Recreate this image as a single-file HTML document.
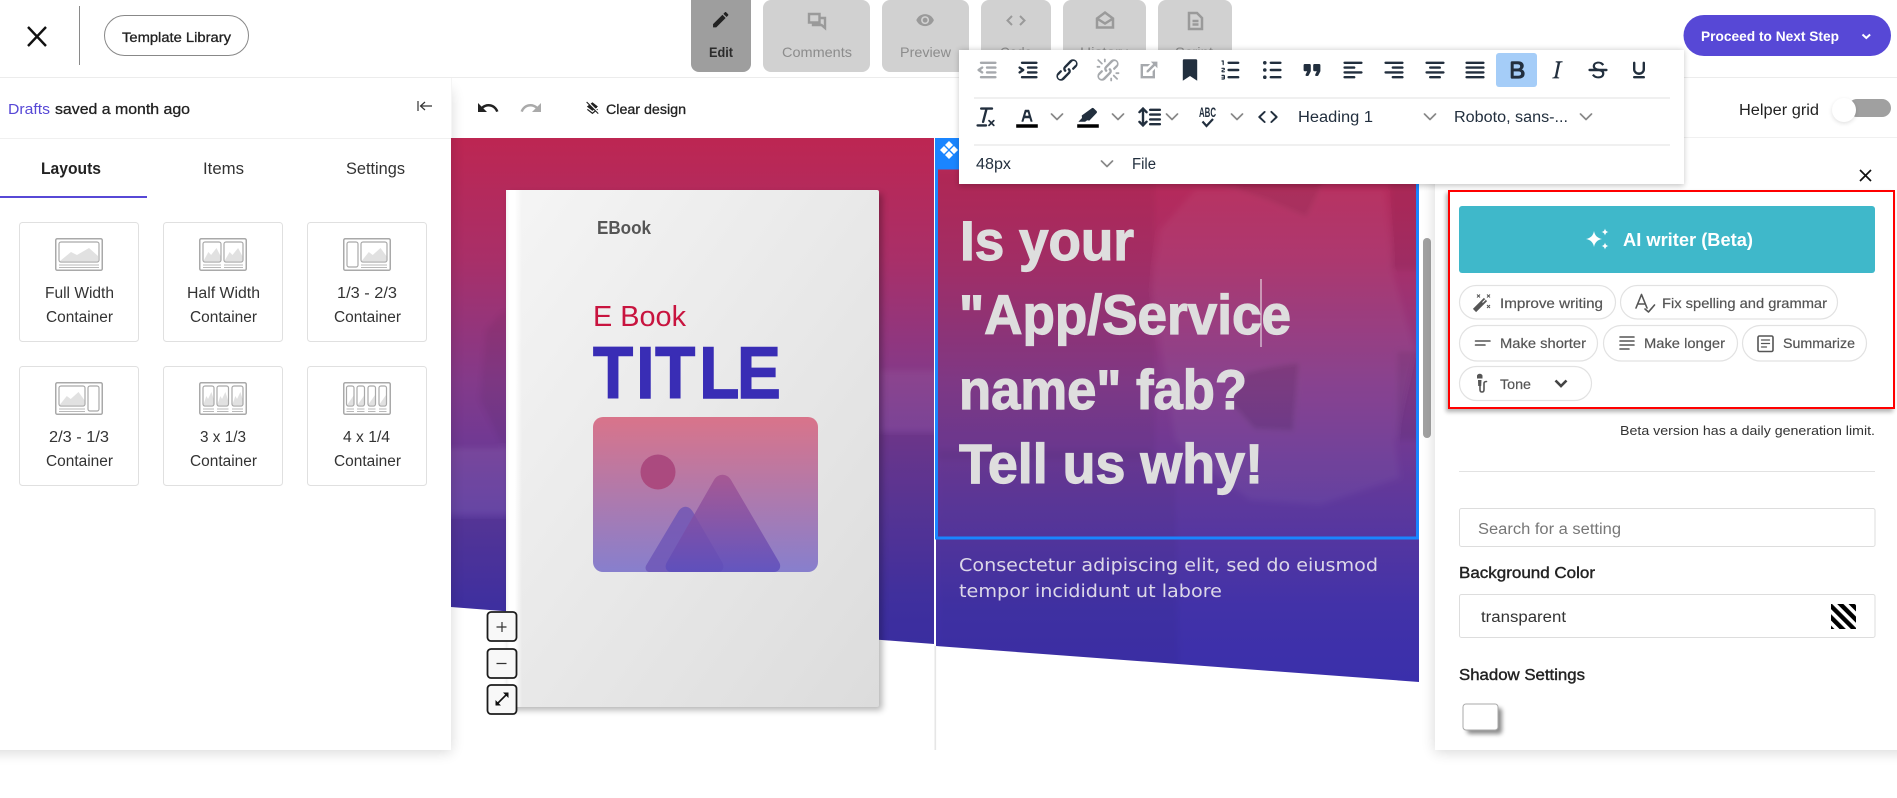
<!DOCTYPE html>
<html lang="en"><head><meta charset="utf-8"><title>Editor</title>
<style>
html,body{margin:0;padding:0;background:#fff;width:1897px;height:798px;overflow:hidden}
svg{display:block}
text{font-family:"Liberation Sans",Arial,sans-serif;fill:#2b2b2b}
.m{stroke:currentColor;stroke-width:.3px}
.i{fill:#222f3e}.g{fill:#a6a9ad}
.tb{fill:#222f3e;font-size:15.5px}
.ct{font-size:15.5px;fill:#333;text-anchor:start}
.pl{font-size:14px;fill:#555;stroke:#555;stroke-width:.2px}
.tab{font-size:14px}
.cv{fill:none;stroke:#888;stroke-width:1.7;stroke-linecap:round;stroke-linejoin:round}
.o{fill:#fff;stroke:#a9a9a9;stroke-width:1.5}
.f{fill:#fff;stroke:#a9a9a9;stroke-width:1.2}
.mt{fill:#e1e1e1}
.l{stroke:#b9b9b9;stroke-width:1}
.pill{fill:#fff;stroke:#e2e2e2;stroke-width:1.2}
.pi{fill:none;stroke:#555;stroke-width:1.6;stroke-linecap:round;stroke-linejoin:round}
.b{fill:#fff;stroke:#ddd;stroke-width:1}
.zb{fill:#f8f8f8;stroke:#1c1c1c;stroke-width:1.8}
.h{font-size:56px;font-weight:700;fill:#dedede;stroke:#dedede;stroke-width:1.2px}
.s{font-family:"DejaVu Sans",sans-serif;font-size:17.5px;fill:#dcd7e8}
.card{fill:#fff;stroke:#e0e0e0;stroke-width:1}
</style></head><body>
<svg width="1897" height="798" viewBox="0 0 1897 798" xmlns="http://www.w3.org/2000/svg">
<defs>
<linearGradient id="hero" gradientUnits="userSpaceOnUse" x1="0" y1="138" x2="0" y2="682">
<stop offset="0" stop-color="#bd2652"/><stop offset=".22" stop-color="#a92f68"/><stop offset=".45" stop-color="#833a8a"/><stop offset=".68" stop-color="#5c389d"/><stop offset=".86" stop-color="#4232a8"/><stop offset="1" stop-color="#3a2fab"/>
</linearGradient>
<linearGradient id="book" x1="0" y1="0" x2="1" y2="1"><stop offset="0" stop-color="#f5f5f5"/><stop offset="1" stop-color="#dcdcdc"/></linearGradient>
<linearGradient id="spine" x1="0" x2="1" y1="0" y2="0"><stop offset="0" stop-color="#f2f2f2"/><stop offset=".2" stop-color="#fff"/><stop offset=".55" stop-color="#fff"/><stop offset="1" stop-color="#fff" stop-opacity="0"/></linearGradient>
<linearGradient id="img" x1="0" x2="0" y1="0" y2="1"><stop offset="0" stop-color="#d9748a"/><stop offset="1" stop-color="#877fcd"/></linearGradient>
<linearGradient id="mnt" x1="0" x2="0" y1="0" y2="1"><stop offset="0" stop-color="#a2508f"/><stop offset="1" stop-color="#5a4cbc"/></linearGradient>
<pattern id="st" width="8" height="8" patternUnits="userSpaceOnUse" patternTransform="rotate(-45)"><rect width="8" height="8" fill="#fff"/><rect width="4.4" height="8" fill="#000"/></pattern>
<filter id="sh" x="-10%" y="-10%" width="120%" height="125%"><feGaussianBlur stdDeviation="7"/></filter>
<filter id="sh2" x="-10%" y="-30%" width="120%" height="160%"><feGaussianBlur stdDeviation="3"/></filter>
<filter id="sh3" x="-30%" y="-30%" width="170%" height="170%"><feGaussianBlur stdDeviation="2"/></filter>
<filter id="sh4" x="-10%" y="-10%" width="120%" height="120%"><feGaussianBlur stdDeviation="3.5"/></filter>
<filter id="bl" x="-20%" y="-20%" width="140%" height="140%"><feGaussianBlur stdDeviation="3"/></filter>
<clipPath id="cL"><polygon points="451,138 934,138 934,644 451,607"/></clipPath>
<clipPath id="cR"><polygon points="936,138 1419,138 1419,682 936,646"/></clipPath>
</defs>
<rect width="1897" height="798" fill="#fff"/>

<!-- HERO LEFT -->
<g clip-path="url(#cL)">
<rect x="451" y="138" width="483" height="510" fill="url(#hero)"/>
<g filter="url(#bl)">
<rect x="445" y="448" width="66" height="66" fill="#fff" opacity=".07"/>
<rect x="445" y="515" width="66" height="100" fill="#000" opacity=".05"/>
<polygon points="486,330 505,310 505,450 480,400" fill="#000" opacity=".05"/>
<polygon points="880,430 940,430 940,650 880,650" fill="#000" opacity=".06"/>
<rect x="880" y="370" width="60" height="60" fill="#fff" opacity=".05"/>
</g>
</g>

<!-- HERO RIGHT -->
<g clip-path="url(#cR)">
<rect x="936" y="138" width="483" height="550" fill="url(#hero)"/>
<g filter="url(#bl)">
<rect x="930" y="170" width="225" height="290" fill="#000" opacity=".04"/>
<polygon points="1152,290 1160,230 1195,190 1385,190 1392,270 1415,350 1395,440 1400,478 1320,505 1250,500 1210,470 1175,440" fill="#fff" opacity=".045"/>
<polygon points="1205,180 1325,180 1307,218 1265,200" fill="#000" opacity=".07"/>
<path d="M1245 372q30-8 55-10l-6 70-40-2-25-28z" fill="#000" opacity=".1"/>
<rect x="1390" y="180" width="35" height="90" fill="#000" opacity=".06"/>
<rect x="1396" y="350" width="28" height="90" fill="#000" opacity=".06"/>
<polygon points="938,450 1150,450 1175,480 1180,700 938,700" fill="#000" opacity=".04"/>
</g>
</g>
<rect x="934.5" y="646" width="1.6" height="104" fill="#e6e6e6"/>

<!-- BOOK -->
<rect x="510" y="194" width="372" height="516" fill="#000" opacity=".3" filter="url(#sh4)"/>
<rect x="506" y="190" width="373" height="517" rx="2" fill="url(#book)"/>
<rect x="506" y="190" width="16" height="517" fill="url(#spine)"/>
<text x="597" y="234" font-size="18" font-weight="700" textLength="54" lengthAdjust="spacingAndGlyphs" style="fill:#555">EBook</text>
<text x="593" y="326" font-size="29" textLength="93" lengthAdjust="spacingAndGlyphs" style="fill:#c8143f">E Book</text>
<text transform="translate(593,398) scale(.9,1)" x="0 48 69 118 160" y="0" font-size="73" font-weight="700" style="fill:#392db5;stroke:#392db5;stroke-width:1.4px">TITLE</text>
<rect x="593" y="417" width="225" height="155" rx="10" fill="url(#img)"/>
<circle cx="658" cy="472" r="17.5" fill="#ab4a7f"/>
<path d="M650 572c-4 0-6-4-3-8l31-52c4-7 11-7 15 0l29 50c3 5 1 10-4 10z" fill="#6a50b4" opacity=".72"/>
<path d="M672 572c-6 0-8-5-5-10l47-82c4-7 13-7 17 0l48 82c3 5 0 10-5 10z" fill="url(#mnt)" opacity=".8"/>

<!-- ZOOM CONTROLS -->
<rect x="487.5" y="612" width="29" height="29" rx="3.5" class="zb"/>
<rect x="487.5" y="649" width="29" height="29" rx="3.5" class="zb"/>
<rect x="487.5" y="685" width="29" height="29" rx="3.5" class="zb"/>
<path d="M496.5 627h10M502 622v10M496.5 663.5h10" stroke="#333" stroke-width="1.2"/>
<path d="M496 705l12-12" stroke="#111" stroke-width="1.6"/><path d="M508.5 692.5v5.5l-5.5-5.5zM495.5 705.5v-5.5l5.5 5.5z" fill="#111"/>

<!-- SELECTION -->
<rect x="936.5" y="168" width="481" height="370" fill="none" stroke="#1a85ff" stroke-width="3"/>
<rect x="935" y="138" width="25" height="30" fill="#1a85ff"/>
<g fill="#fff"><polygon points="949,141 953,145 949,149 945,145"/><polygon points="949,151 953,155 949,159 945,155"/><polygon points="944,146 948,150 944,154 940,150"/><polygon points="954,146 958,150 954,154 950,150"/></g>

<!-- HEADING -->
<text class="h" x="960" y="260" textLength="174" lengthAdjust="spacingAndGlyphs">Is your</text>
<text class="h" x="959" y="334" textLength="332" lengthAdjust="spacingAndGlyphs">"App/Service</text>
<text class="h" x="959" y="409" textLength="288" lengthAdjust="spacingAndGlyphs">name" fab?</text>
<text class="h" x="959" y="483" textLength="304" lengthAdjust="spacingAndGlyphs">Tell us why!</text>
<rect x="1260.5" y="279" width="1" height="68" fill="#f2f2f2"/>
<text class="s" x="959" y="571" textLength="419" lengthAdjust="spacingAndGlyphs">Consectetur adipiscing elit, sed do eiusmod</text>
<text class="s" x="959" y="597" textLength="263" lengthAdjust="spacingAndGlyphs">tempor incididunt ut labore</text>

<!-- SCROLLBAR -->
<rect x="1423" y="238" width="8" height="200" rx="4" fill="#a2a2a2"/>

<!-- RIGHT PANEL -->
<rect x="1435" y="90" width="480" height="662" fill="#000" opacity=".16" filter="url(#sh)"/>
<rect x="1435" y="78" width="462" height="672" fill="#fff"/>
<!-- LEFT PANEL -->
<rect x="-20" y="90" width="471" height="662" fill="#000" opacity=".16" filter="url(#sh)"/>
<rect x="0" y="78" width="451" height="672" fill="#fff"/>

<!-- TOP BAR -->
<rect x="0" y="0" width="1897" height="77" fill="#fff"/>
<rect x="0" y="77" width="1897" height="1" fill="#ececec"/>
<rect x="0" y="138" width="451" height="1" fill="#f0f0f0"/>
<rect x="451" y="78" width="1" height="60" fill="#f5f5f5"/>
<rect x="1435" y="137" width="462" height="1" fill="#f0f0f0"/>
<path d="M28 27l18 19M46 27L28 46" stroke="#111" stroke-width="2.4" fill="none"/>
<rect x="79" y="6" width="1" height="59" fill="#8a8a8a"/>
<rect x="104.5" y="15.5" width="144" height="40" rx="20" fill="#fff" stroke="#888" stroke-width="1"/>
<text class="m" x="122" y="42" font-size="13.5" textLength="109" lengthAdjust="spacingAndGlyphs" style="color:#222;fill:#222">Template Library</text>

<!-- Tabs -->
<path d="M691 0h60v64a8 8 0 0 1-8 8h-44a8 8 0 0 1-8-8z" fill="#9e9e9e"/>
<path d="M763 8a8 8 0 0 1 8-8h91a8 8 0 0 1 8 8v56a8 8 0 0 1-8 8h-91a8 8 0 0 1-8-8z" fill="#d1d1d1"/>
<path d="M882 8a8 8 0 0 1 8-8h71a8 8 0 0 1 8 8v56a8 8 0 0 1-8 8h-71a8 8 0 0 1-8-8z" fill="#d1d1d1"/>
<path d="M981 8a8 8 0 0 1 8-8h54a8 8 0 0 1 8 8v56a8 8 0 0 1-8 8h-54a8 8 0 0 1-8-8z" fill="#d1d1d1"/>
<path d="M1063 8a8 8 0 0 1 8-8h67a8 8 0 0 1 8 8v56a8 8 0 0 1-8 8h-67a8 8 0 0 1-8-8z" fill="#d1d1d1"/>
<path d="M1158 8a8 8 0 0 1 8-8h58a8 8 0 0 1 8 8v56a8 8 0 0 1-8 8h-58a8 8 0 0 1-8-8z" fill="#d1d1d1"/>
<path transform="translate(710.5,9.5) scale(.85)" d="M3 17.25V21h3.75L17.81 9.94l-3.75-3.75L3 17.25zM20.71 7.04c.39-.39.39-1.02 0-1.41l-2.34-2.34c-.39-.39-1.02-.39-1.41 0l-1.83 1.83 3.75 3.75 1.83-1.83z" fill="#222"/>
<path d="M809 14h10.500v8.500h-10.500zM819.500 18h5.500v10l-3.500-3H813v-2.500" fill="none" stroke="#9a9a9a" stroke-width="2.400"/>
<path transform="translate(915.5,10.5) scale(.8)" d="M12 4.5C7 4.5 2.73 7.61 1 12c1.73 4.39 6 7.5 11 7.5s9.27-3.11 11-7.5c-1.73-4.39-6-7.5-11-7.5zM12 17c-2.76 0-5-2.24-5-5s2.24-5 5-5 5 2.24 5 5-2.24 5-5 5zm0-8c-1.66 0-3 1.34-3 3s1.34 3 3 3 3-1.34 3-3-1.34-3-3-3z" fill="#9a9a9a"/>
<path d="M1012 16l-4.500 4.500 4.500 4.500M1020 16l4.500 4.500-4.500 4.500" fill="none" stroke="#9a9a9a" stroke-width="2"/>
<path d="M1097 18.500l8-6 8 6v9h-16zM1097 18.500l8 5 8-5" fill="none" stroke="#9a9a9a" stroke-width="2.500"/>
<path d="M1189 13h8l5 5v11h-13zM1192.500 21h6M1192.500 24.500h6" fill="none" stroke="#9a9a9a" stroke-width="2.500"/>
<text class="tab" x="709" y="57" textLength="24" lengthAdjust="spacingAndGlyphs" style="fill:#2b2b2b;font-weight:700;font-size:13.5px">Edit</text>
<text class="tab" x="782" y="57" textLength="70" lengthAdjust="spacingAndGlyphs" style="fill:#8c8c8c">Comments</text>
<text class="tab" x="900" y="57" textLength="51" lengthAdjust="spacingAndGlyphs" style="fill:#8c8c8c">Preview</text>
<text class="tab" x="1000" y="57" textLength="32" lengthAdjust="spacingAndGlyphs" style="fill:#8c8c8c">Code</text>
<text class="tab" x="1080" y="57" textLength="48" lengthAdjust="spacingAndGlyphs" style="fill:#8c8c8c">History</text>
<text class="tab" x="1175" y="57" textLength="38" lengthAdjust="spacingAndGlyphs" style="fill:#8c8c8c">Script</text>

<!-- Proceed -->
<rect x="1683.5" y="15" width="207.5" height="41" rx="20.5" fill="#5748d6"/>
<text x="1701" y="41" font-size="14" font-weight="700" textLength="138" lengthAdjust="spacingAndGlyphs" style="fill:#fff">Proceed to Next Step</text>
<path d="M1862.5 34.500l3.800 3.500 3.800-3.500" fill="none" stroke="#fff" stroke-width="2"/>

<!-- LEFT PANEL CONTENT -->
<text x="8" y="114" font-size="15" textLength="42" lengthAdjust="spacingAndGlyphs" style="fill:#5748d6">Drafts</text>
<text class="m" x="55" y="114" font-size="15" textLength="135" lengthAdjust="spacingAndGlyphs" style="color:#222;fill:#222">saved a month ago</text>
<path d="M418 101v10M432 106h-11M425 102l-4.5 4 4.5 4" fill="none" stroke="#333" stroke-width="1.2"/>
<text x="41" y="174" font-size="17" font-weight="700" textLength="60" lengthAdjust="spacingAndGlyphs" style="fill:#222">Layouts</text>
<text x="203" y="174" font-size="17" textLength="41" lengthAdjust="spacingAndGlyphs" style="fill:#333">Items</text>
<text x="346" y="174" font-size="17" textLength="59" lengthAdjust="spacingAndGlyphs" style="fill:#333">Settings</text>
<rect x="0" y="196" width="147" height="2" fill="#5748d6"/>

<!-- Cards -->
<rect class="card" x="19.5" y="222.5" width="119" height="119" rx="3"/>
<rect class="card" x="163.5" y="222.5" width="119" height="119" rx="3"/>
<rect class="card" x="307.5" y="222.5" width="119" height="119" rx="3"/>
<rect class="card" x="19.5" y="366.5" width="119" height="119" rx="3"/>
<rect class="card" x="163.5" y="366.5" width="119" height="119" rx="3"/>
<rect class="card" x="307.5" y="366.5" width="119" height="119" rx="3"/>

<g transform="translate(55,238)"><rect class="o" x=".75" y=".75" width="46.5" height="31.5" rx="1.5"/><polygon class="mt" transform="translate(4,4)" points="1,19 12,10 18,13 30,6 39,14 39,19"/><rect class="f" x="4" y="4" width="40" height="20" rx="2" fill-opacity="0"/><path class="l" d="M4 27h40M4 29.5h40"/></g>
<g transform="translate(199,238)"><rect class="o" x=".75" y=".75" width="46.5" height="31.5" rx="1.5"/><polygon class="mt" transform="translate(4,4) scale(.45,1)" points="1,19 12,10 18,13 30,6 39,14 39,19"/><polygon class="mt" transform="translate(25,4) scale(.47,1)" points="1,19 12,10 18,13 30,6 39,14 39,19"/><rect class="f" x="4" y="4" width="18" height="20" rx="2" fill-opacity="0"/><rect class="f" x="25" y="4" width="19" height="20" rx="2" fill-opacity="0"/><path class="l" d="M4 27h18M25 27h19M4 29.5h18M25 29.5h19"/></g>
<g transform="translate(343,238)"><rect class="o" x=".75" y=".75" width="46.5" height="31.5" rx="1.5"/><rect class="f" x="4" y="4" width="11" height="25" rx="2"/><polygon class="mt" transform="translate(18,4) scale(.65,1)" points="1,19 12,10 18,13 30,6 39,14 39,19"/><rect class="f" x="18" y="4" width="26" height="20" rx="2" fill-opacity="0"/><path class="l" d="M18 27h26M18 29.5h26"/></g>
<g transform="translate(55,382)"><rect class="o" x=".75" y=".75" width="46.5" height="31.5" rx="1.5"/><polygon class="mt" transform="translate(4,4) scale(.65,1)" points="1,19 12,10 18,13 30,6 39,14 39,19"/><rect class="f" x="4" y="4" width="26" height="20" rx="2" fill-opacity="0"/><rect class="f" x="33" y="4" width="11" height="25" rx="2"/><path class="l" d="M4 27h26M4 29.5h26"/></g>
<g transform="translate(199,382)"><rect class="o" x=".75" y=".75" width="46.5" height="31.5" rx="1.5"/><polygon class="mt" transform="translate(4,4) scale(.28,1)" points="1,19 12,10 18,13 30,6 39,14 39,19"/><polygon class="mt" transform="translate(18,4) scale(.28,1)" points="1,19 12,10 18,13 30,6 39,14 39,19"/><polygon class="mt" transform="translate(33,4) scale(.28,1)" points="1,19 12,10 18,13 30,6 39,14 39,19"/><rect class="f" x="4" y="4" width="11" height="20" rx="2" fill-opacity="0"/><rect class="f" x="18" y="4" width="11.5" height="20" rx="2" fill-opacity="0"/><rect class="f" x="33" y="4" width="11" height="20" rx="2" fill-opacity="0"/><path class="l" d="M4 27h11M18 27h11.5M33 27h11M4 29.5h11M18 29.5h11.5M33 29.5h11"/></g>
<g transform="translate(343,382)"><rect class="o" x=".75" y=".75" width="46.5" height="31.5" rx="1.5"/><polygon class="mt" points="4,23 11,13 11,23"/><polygon class="mt" points="14.5,23 21.5,13 21.5,23"/><polygon class="mt" points="25,23 32,13 32,23"/><polygon class="mt" points="36,23 43,13 43,23"/><rect class="f" x="3.5" y="4" width="7.5" height="20" rx="2" fill-opacity="0"/><rect class="f" x="14" y="4" width="7.5" height="20" rx="2" fill-opacity="0"/><rect class="f" x="25" y="4" width="7.5" height="20" rx="2" fill-opacity="0"/><rect class="f" x="36" y="4" width="7.5" height="20" rx="2" fill-opacity="0"/><path class="l" d="M3.5 27h7.5M14 27h7.5M25 27h7.5M36 27h7.5M3.5 29.5h7.5M14 29.5h7.5M25 29.5h7.5M36 29.5h7.5"/></g>

<text class="ct" x="45" y="298" textLength="69" lengthAdjust="spacingAndGlyphs">Full Width</text>
<text class="ct" x="46" y="322" textLength="67" lengthAdjust="spacingAndGlyphs">Container</text>
<text class="ct" x="187" y="298" textLength="73" lengthAdjust="spacingAndGlyphs">Half Width</text>
<text class="ct" x="190" y="322" textLength="67" lengthAdjust="spacingAndGlyphs">Container</text>
<text class="ct" x="337" y="298" textLength="60" lengthAdjust="spacingAndGlyphs">1/3 - 2/3</text>
<text class="ct" x="334" y="322" textLength="67" lengthAdjust="spacingAndGlyphs">Container</text>
<text class="ct" x="49" y="442" textLength="60" lengthAdjust="spacingAndGlyphs">2/3 - 1/3</text>
<text class="ct" x="46" y="466" textLength="67" lengthAdjust="spacingAndGlyphs">Container</text>
<text class="ct" x="200" y="442" textLength="46" lengthAdjust="spacingAndGlyphs">3 x 1/3</text>
<text class="ct" x="190" y="466" textLength="67" lengthAdjust="spacingAndGlyphs">Container</text>
<text class="ct" x="343" y="442" textLength="47" lengthAdjust="spacingAndGlyphs">4 x 1/4</text>
<text class="ct" x="334" y="466" textLength="67" lengthAdjust="spacingAndGlyphs">Container</text>

<!-- CANVAS TOOLBAR -->
<path transform="translate(476,96)" d="M12.5 8c-2.65 0-5.05.99-6.9 2.6L2 7v9h9l-3.62-3.62c1.39-1.16 3.16-1.88 5.12-1.88 3.54 0 6.55 2.31 7.6 5.5l2.37-.78C21.08 11.03 17.15 8 12.5 8z" fill="#222"/>
<path transform="translate(519,96)" d="M18.4 10.6C16.55 8.99 14.15 8 11.5 8c-4.65 0-8.58 3.03-9.96 7.22L3.9 16c1.05-3.19 4.05-5.5 7.6-5.5 1.95 0 3.73.72 5.12 1.88L13 16h9V7l-3.6 3.6z" fill="#aaa"/>
<path transform="translate(585,101) scale(.62)" d="M19.81 14.99l1.19-.92-1.43-1.43-1.19.92 1.43 1.43zm-.45-5.14L21 9l-9-7-2.91 2.27 7.87 7.88 2.4-1.3zM3.27 1L2 2.27l4.22 4.22L3 9l1.63 1.27L12 16l2.1-1.63 1.43 1.43L12 18.54l-7.37-5.73L3 14.07l9 7 4.95-3.85L20.73 21 22 19.73 3.27 1z" fill="#222"/>
<text class="m" x="606" y="114" font-size="13.5" textLength="80" lengthAdjust="spacingAndGlyphs" style="color:#222;fill:#222">Clear design</text>

<text x="1739" y="115" font-size="15.5" textLength="80" lengthAdjust="spacingAndGlyphs" style="fill:#222">Helper grid</text>
<rect x="1848" y="99" width="43" height="18" rx="9" fill="#a0a0a0"/>
<circle cx="1844" cy="111.5" r="12" fill="#000" opacity=".12" filter="url(#sh3)"/>
<circle cx="1844" cy="110" r="12" fill="#fff"/>

<!-- TINYMCE TOOLBAR -->
<rect x="959" y="50" width="725" height="136" fill="#000" opacity=".22" filter="url(#sh2)"/>
<rect x="959" y="50" width="725" height="134" fill="#fff"/>
<rect x="974" y="97.5" width="696" height="1" fill="#e0e0e0"/>
<rect x="974" y="144.5" width="696" height="1" fill="#e0e0e0"/>
<rect x="1496" y="53" width="41" height="34" rx="3" fill="#a5cdf8"/>

<g transform="translate(972.6,55.6) scale(1.2)" class="g"><path d="M7 5h12c.6 0 1 .4 1 1s-.4 1-1 1H7a1 1 0 1 1 0-2zm5 4h7c.6 0 1 .4 1 1s-.4 1-1 1h-7a1 1 0 0 1 0-2zm0 4h7c.6 0 1 .4 1 1s-.4 1-1 1h-7a1 1 0 0 1 0-2zm-5 4h12a1 1 0 0 1 0 2H7a1 1 0 0 1 0-2zm1.6-3.8a1 1 0 0 1-1.2 1.6l-3-2a1 1 0 0 1 0-1.6l3-2a1 1 0 0 1 1.2 1.6L6.8 12l1.8 1.2z"/></g>
<g transform="translate(1013.6,55.6) scale(1.2)" class="i"><path d="M7 5h12c.6 0 1 .4 1 1s-.4 1-1 1H7a1 1 0 1 1 0-2zm5 4h7c.6 0 1 .4 1 1s-.4 1-1 1h-7a1 1 0 0 1 0-2zm0 4h7c.6 0 1 .4 1 1s-.4 1-1 1h-7a1 1 0 0 1 0-2zm-5 4h12a1 1 0 0 1 0 2H7a1 1 0 0 1 0-2zm-2.6-3.8L6.2 12l-1.8-1.2a1 1 0 0 1 1.2-1.6l3 2a1 1 0 0 1 0 1.6l-3 2a1 1 0 1 1-1.2-1.6z"/></g>
<g transform="translate(1052.6,55.6) scale(1.2)" class="i"><path d="M6.2 12.3a1 1 0 0 1 1.4 1.4l-2 2a2 2 0 1 0 2.6 2.8l4.8-4.8a1 1 0 0 0 0-1.4 1 1 0 1 1 1.4-1.3 2.9 2.9 0 0 1 0 4L9.6 20a3.9 3.9 0 0 1-5.5-5.5l2-2zm11.6-.6a1 1 0 0 1-1.4-1.4l2-2a2 2 0 1 0-2.6-2.8L11 10.3a1 1 0 0 0 0 1.4A1 1 0 1 1 9.6 13a2.9 2.9 0 0 1 0-4L14.4 4a3.9 3.9 0 0 1 5.5 5.5l-2 2z"/></g>
<g transform="translate(1093.6,55.6) scale(1.2)" class="g"><path d="M6.2 12.3a1 1 0 0 1 1.4 1.4l-2.1 2a2 2 0 1 0 2.7 2.8l4.8-4.8a1 1 0 0 0 0-1.4 1 1 0 1 1 1.4-1.3 2.9 2.9 0 0 1 0 4L9.6 20a3.9 3.9 0 0 1-5.5-5.5l2-2zm11.6-.6a1 1 0 0 1-1.4-1.4l2.1-2a2 2 0 1 0-2.7-2.8L11 10.3a1 1 0 0 0 0 1.4A1 1 0 1 1 9.6 13a2.9 2.9 0 0 1 0-4L14.4 4a3.9 3.9 0 0 1 5.5 5.5l-2 2zM7.6 6.3a.8.8 0 0 1-1 1.1L3.3 4.2a.7.7 0 1 1 1-1l3.2 3.1zM5.1 8.6a.8.8 0 0 1 0 1.5H3a.8.8 0 0 1 0-1.5H5zm5-3.5a.8.8 0 0 1-1.5 0V3a.8.8 0 0 1 1.5 0v2zm6 11.8a.8.8 0 0 1 1-1l3.2 3.2a.8.8 0 0 1-1 1L16 17zm-2.2 2a.8.8 0 0 1 1.5 0V21a.8.8 0 0 1-1.5 0V19zm5-3.5a.7.7 0 1 1 0-1.5H21a.8.8 0 0 1 0 1.5h-2z"/></g>
<g transform="translate(1134.6,55.6) scale(1.2)" class="g"><path d="M15 13l2-2v8H5V7h8l-2 2H7v8h8v-4zm4-8v5.5l-2-2-5.6 5.5H10v-1.4L15.5 7l-2-2H19z"/></g>
<g transform="translate(1175.6,55.6) scale(1.2)" class="i"><path d="M6 4v17l6-4 6 4V4c0-.6-.4-1-1-1H7a1 1 0 0 0-1 1z"/></g>
<g transform="translate(1216.6,55.6) scale(1.2)" class="i"><path d="M10 17h8c.6 0 1 .4 1 1s-.4 1-1 1h-8a1 1 0 0 1 0-2zm0-6h8c.6 0 1 .4 1 1s-.4 1-1 1h-8a1 1 0 0 1 0-2zm0-6h8c.6 0 1 .4 1 1s-.4 1-1 1h-8a1 1 0 1 1 0-2zM6 4v3.5c0 .3-.2.5-.5.5a.5.5 0 0 1-.5-.5V5h-.5a.5.5 0 0 1 0-1H6zm-1 8.8l.2.2h1.3c.3 0 .5.2.5.5s-.2.5-.5.5H4.9a1 1 0 0 1-.9-1V13c0-.4.3-.8.6-1l1.2-.4.2-.3a.2.2 0 0 0-.2-.2H4.5a.5.5 0 0 1-.5-.5c0-.3.2-.5.5-.5h1.6c.5 0 .9.4.9 1v.1c0 .4-.3.8-.6 1l-1.2.4-.2.3zM7 17v2c0 .6-.4 1-1 1H4.5a.5.5 0 0 1 0-1h1.2c.2 0 .3-.1.3-.3 0-.2-.1-.3-.3-.3H4.4a.4.4 0 1 1 0-.8h1.3c.2 0 .3-.1.3-.3 0-.2-.1-.3-.3-.3H4.5a.5.5 0 1 1 0-1H6c.6 0 1 .4 1 1z"/></g>
<g transform="translate(1257.6,55.6) scale(1.2)" class="i"><path d="M11 5h8c.6 0 1 .4 1 1s-.4 1-1 1h-8a1 1 0 0 1 0-2zm0 6h8c.6 0 1 .4 1 1s-.4 1-1 1h-8a1 1 0 0 1 0-2zm0 6h8c.6 0 1 .4 1 1s-.4 1-1 1h-8a1 1 0 0 1 0-2z"/><circle cx="6" cy="6" r="1.5"/><circle cx="6" cy="12" r="1.5"/><circle cx="6" cy="18" r="1.5"/></g>
<g transform="translate(1297.6,55.6) scale(1.2)" class="i"><path d="M7.5 17h.9c.4 0 .7-.2.9-.6L11 13V8c0-.6-.4-1-1-1H6a1 1 0 0 0-1 1v4c0 .6.4 1 1 1h2l-1.3 2.7a1 1 0 0 0 .8 1.3zm8 0h.9c.4 0 .7-.2.9-.6L19 13V8c0-.6-.4-1-1-1h-4a1 1 0 0 0-1 1v4c0 .6.4 1 1 1h2l-1.3 2.7a1 1 0 0 0 .8 1.3z"/></g>
<g transform="translate(1338.6,55.6) scale(1.2)" class="i"><path d="M5 5h14c.6 0 1 .4 1 1s-.4 1-1 1H5a1 1 0 1 1 0-2zm0 4h8c.6 0 1 .4 1 1s-.4 1-1 1H5a1 1 0 1 1 0-2zm0 8h8c.6 0 1 .4 1 1s-.4 1-1 1H5a1 1 0 0 1 0-2zm0-4h14c.6 0 1 .4 1 1s-.4 1-1 1H5a1 1 0 0 1 0-2z"/></g>
<g transform="translate(1379.6,55.6) scale(1.2)" class="i"><path d="M5 5h14c.6 0 1 .4 1 1s-.4 1-1 1H5a1 1 0 1 1 0-2zm6 4h8c.6 0 1 .4 1 1s-.4 1-1 1h-8a1 1 0 0 1 0-2zm0 8h8c.6 0 1 .4 1 1s-.4 1-1 1h-8a1 1 0 0 1 0-2zm-6-4h14c.6 0 1 .4 1 1s-.4 1-1 1H5a1 1 0 0 1 0-2z"/></g>
<g transform="translate(1420.6,55.6) scale(1.2)" class="i"><path d="M5 5h14c.6 0 1 .4 1 1s-.4 1-1 1H5a1 1 0 1 1 0-2zm3 4h8c.6 0 1 .4 1 1s-.4 1-1 1H8a1 1 0 1 1 0-2zm0 8h8c.6 0 1 .4 1 1s-.4 1-1 1H8a1 1 0 0 1 0-2zm-3-4h14c.6 0 1 .4 1 1s-.4 1-1 1H5a1 1 0 0 1 0-2z"/></g>
<g transform="translate(1460.6,55.6) scale(1.2)" class="i"><path d="M5 5h14c.6 0 1 .4 1 1s-.4 1-1 1H5a1 1 0 1 1 0-2zm0 4h14c.6 0 1 .4 1 1s-.4 1-1 1H5a1 1 0 1 1 0-2zm0 4h14c.6 0 1 .4 1 1s-.4 1-1 1H5a1 1 0 0 1 0-2zm0 4h14c.6 0 1 .4 1 1s-.4 1-1 1H5a1 1 0 0 1 0-2z"/></g>
<g transform="translate(1502.6,55.6) scale(1.2)" class="i" stroke="#222f3e" stroke-width=".5"><path d="M7.8 19c-.3 0-.5 0-.6-.2l-.2-.5V5.700c0-.2 0-.4.2-.5l.6-.2h5c1.500 0 2.700.3 3.500 1 .7.6 1.100 1.400 1.100 2.500a3 3 0 0 1-.6 1.900c-.4.6-1 1-1.600 1.200.9.1 1.600.5 2.100 1.100.5.6.8 1.400.8 2.300 0 1.200-.4 2.200-1.200 2.900-.8.7-2 1-3.600 1H7.800zM9 11h3.200c1.800 0 2.700-.7 2.700-2s-.9-2-2.700-2H9v4zm0 6h3.900c1.900 0 2.800-.7 2.800-2.100 0-1.400-.9-2-2.800-2H9V17z"/></g>
<g transform="translate(1542.6,55.6) scale(1.2)" class="i"><path d="M16.7 4.700l-.1.9h-.3c-.6 0-1 0-1.400.3-.3.3-.4.6-.5 1.100l-2.100 9.800v.6c0 .5.4.8 1.400.8h.2l-.2.8H8l.2-.8h.2c1.100 0 1.800-.5 2-1.500l2-9.800.1-.5c0-.6-.4-.8-1.400-.8h-.3l.2-.9h5.800z"/></g>
<g transform="translate(1583.6,55.6) scale(1.2)" class="i"><path d="M15.600 8.500c-.5-.7-1-1.100-1.300-1.300-.6-.4-1.300-.6-2-.6-2.700 0-2.800 1.700-2.800 2.100 0 1.600 1.800 2 3.200 2.300 4.400.9 4.600 2.800 4.600 3.900 0 1.400-.7 4.100-5 4.100A6.200 6.200 0 0 1 7 16.400l1.500-1.100c.4.6 1.600 2 3.700 2 1.600 0 2.500-.4 3-1.200.4-.8.3-2-.8-2.600-.7-.4-1.600-.7-2.900-1-1-.2-3.900-.8-3.900-3.600C7.600 6 10.300 5 12.400 5c2.900 0 4.200 1.600 4.700 2.400l-1.500 1.100z"/><path d="M5 11h14a1 1 0 0 1 0 2H5a1 1 0 0 1 0-2z"/></g>
<g transform="translate(1624.6,55.6) scale(1.2)" class="i"><path d="M16 5c.6 0 1 .4 1 1v5.500a4 4 0 0 1-.4 1.800l-1 1.400a5.300 5.300 0 0 1-5.500 1 5 5 0 0 1-1.600-1c-.5-.4-.8-.9-1.100-1.400a4 4 0 0 1-.4-1.800V6c0-.6.4-1 1-1s1 .4 1 1v5.500c0 .3 0 .6.2 1l.6.7a3.300 3.300 0 0 0 2.200.8 3.400 3.400 0 0 0 2.200-.8c.3-.2.4-.5.6-.8l.2-.9V6c0-.6.4-1 1-1zM8 17h8c.6 0 1 .4 1 1s-.4 1-1 1H8a1 1 0 0 1 0-2z"/></g>

<!-- Row 2 -->
<g transform="translate(971.6,102.6) scale(1.2)" class="i"><path d="M13.200 6a1 1 0 0 1 0 .2l-2.600 10a1 1 0 0 1-1 .8h-.2a.8.8 0 0 1-.8-1l2.600-10H8a1 1 0 1 1 0-2h9a1 1 0 0 1 0 2h-3.800zM5 18h7a1 1 0 0 1 0 2H5a1 1 0 0 1 0-2zm13 1.500L16.500 18 15 19.500a.7.7 0 0 1-1-1l1.500-1.500-1.500-1.500a.7.7 0 0 1 1-1l1.500 1.500 1.500-1.500a.7.7 0 0 1 1 1L17.500 17l1.500 1.500a.7.7 0 0 1-1 1z"/></g>
<g transform="translate(1012.6,102.6) scale(1.2)" class="i"><path fill="#000" d="M3 18h18v3H3z"/><path d="M8.700 16h-.8a.5.5 0 0 1-.5-.6l2.700-9c.1-.3.3-.4.5-.4h2.800c.2 0 .4.1.5.4l2.700 9a.5.5 0 0 1-.5.6h-.8a.5.5 0 0 1-.4-.4l-.7-2.200c0-.3-.3-.4-.5-.4h-3.400c-.2 0-.4.1-.5.4l-.7 2.200c0 .3-.2.4-.4.4zm2.600-7.600l-.6 2a.5.5 0 0 0 .5.6h1.600a.5.5 0 0 0 .5-.6l-.6-2c0-.3-.3-.4-.5-.4h-.4c-.2 0-.4.1-.5.4z"/></g>
<path class="cv" d="M1051.5 114l5.500 5.500 5.500-5.500M1112.5 114l5.500 5.500 5.500-5.500M1166.5 114l5.500 5.500 5.500-5.500M1231.5 114l5.500 5.500 5.500-5.500"/>
<g transform="translate(1073.6,102.6) scale(1.2)" class="i"><path fill="#000" d="M3 18h18v3H3z"/><path d="M15 4.800c.5-.5 1.300-.5 1.800 0l2.300 2.200c.5.5.5 1.300 0 1.800l-6 6.200-1.800-.3-1.700 1.300H4l3-3.200-.2-2z"/></g>
<g transform="translate(1134.6,102.6) scale(1.2)" class="i"><path d="M21 5a1 1 0 0 1 .1 2H13a1 1 0 0 1-.1-2H21zm0 4a1 1 0 0 1 .1 2H13a1 1 0 0 1-.1-2H21zm0 4a1 1 0 0 1 .1 2H13a1 1 0 0 1-.1-2H21zm0 4a1 1 0 0 1 .1 2H13a1 1 0 0 1-.1-2H21zM7 3.600l3.700 3.700a1 1 0 0 1-1.300 1.500h-.1L8 7.300v9.200l1.300-1.300a1 1 0 0 1 1.300 0h.1c.4.400.4 1 0 1.300v.1L7 20.400l-3.700-3.700a1 1 0 0 1 1.300-1.500h.1L6 16.700V7.400L4.700 8.700a1 1 0 0 1-1.300 0h-.1a1 1 0 0 1 0-1.300v-.1L7 3.600z"/></g>
<text x="1199" y="117" font-size="13.5" font-weight="700" textLength="17" lengthAdjust="spacingAndGlyphs" style="fill:#222f3e">ABC</text>
<path d="M1202.500 121.500l4 4.500 6.500-7" fill="none" stroke="#222f3e" stroke-width="2.200"/>
<g transform="translate(1253.6,102.6) scale(1.2)" class="i"><path d="M9.800 15.700c.3.300.3.800 0 1-.3.400-.9.400-1.200 0l-4.400-4.100a.8.800 0 0 1 0-1.200l4.400-4.200c.3-.3.900-.3 1.200 0 .3.300.3.800 0 1.100L6 12l3.800 3.700zM14.200 15.700c-.3.300-.3.800 0 1 .4.400.9.400 1.200 0l4.400-4.100c.3-.3.3-.9 0-1.200l-4.400-4.200a.8.800 0 0 0-1.200 0c-.3.300-.3.800 0 1.100L18 12l-3.800 3.700z"/></g>
<text class="tb" x="1298" y="122" textLength="75" lengthAdjust="spacingAndGlyphs">Heading 1</text>
<path class="cv" d="M1424.500 114l5.500 5.500 5.500-5.500M1580.500 114l5.500 5.500 5.500-5.500M1101.500 161l5.500 5.500 5.500-5.500"/>
<text class="tb" x="1454" y="122" textLength="114" lengthAdjust="spacingAndGlyphs">Roboto, sans-...</text>
<text class="tb" x="976" y="169" textLength="35" lengthAdjust="spacingAndGlyphs">48px</text>
<text class="tb" x="1132" y="169" textLength="24" lengthAdjust="spacingAndGlyphs">File</text>

<!-- RIGHT PANEL CONTENT -->
<path d="M1860 170l11 11M1871 170l-11 11" stroke="#111" stroke-width="1.7"/>
<rect x="1446" y="193" width="447" height="219" fill="#000" opacity=".3" filter="url(#sh3)"/>
<rect x="1449" y="191" width="445" height="217" fill="#fff" stroke="#f00" stroke-width="2"/>
<rect x="1459" y="206" width="416" height="67" rx="3" fill="#3fb8ca"/>
<path d="M1594 231q1.200 6.800 8 8-6.800 1.200-8 8-1.200-6.800-8-8 6.800-1.200 8-8zM1605 228.500q.5 3 3.500 3.500-3 .5-3.500 3.500-.5-3-3.500-3.500 3-.5 3.500-3.500zM1605 242.500q.5 3 3.500 3.500-3 .5-3.500 3.500-.5-3-3.500-3.500 3-.5 3.500-3.500z" fill="#fff"/>
<text x="1623" y="246" font-size="18" font-weight="700" textLength="130" lengthAdjust="spacingAndGlyphs" style="fill:#fff">AI writer (Beta)</text>

<rect class="pill" x="1459.5" y="285.5" width="156" height="33.5" rx="16.75"/>
<rect class="pill" x="1620.5" y="285.5" width="217" height="33.5" rx="16.75"/>
<rect class="pill" x="1459.5" y="325.5" width="138" height="35.5" rx="17.75"/>
<rect class="pill" x="1603.5" y="325.5" width="134" height="35.5" rx="17.75"/>
<rect class="pill" x="1742.5" y="325.5" width="124" height="35.5" rx="17.75"/>
<rect class="pill" x="1459.5" y="366.5" width="132" height="34" rx="17"/>

<path d="M1474.500 310.500l11-11" stroke="#555" stroke-width="4.500"/><path d="M1482.500 302.500l3-3" stroke="#fff" stroke-width="1"/>
<path d="M1477 294.500l3 3M1480 294.500l-3 3M1487 294.500l3 3M1490 294.500l-3 3M1487 305l3 3M1490 305l-3 3" stroke="#555" stroke-width="1"/>
<path class="pi" d="M1636 308l5.500-13.500 5.500 13.500M1638 304h7M1645 309l3.500 3 6-7"/>
<path class="pi" d="M1475.500 341h14.500M1475.500 345h9.500"/>
<path class="pi" d="M1620 337h14M1620 341h14M1620 345h14M1620 349h9"/>
<rect x="1758" y="336" width="15" height="15.500" rx="1.500" class="pi"/><path class="pi" d="M1761.500 340h8M1761.500 343.500h8M1761.500 347h5" style="stroke-width:1.3"/>
<path d="M1477 375.500a3 3 0 0 1 5.500 0v3h-5.500zM1478 380h3.500l-.3 6h-3z" fill="#555"/><path class="pi" d="M1480 386v3.500q0 2.500 2 2.500t2-2.500v-6q0-2 2.500-2"/>
<path d="M1555.500 380.500l5.500 5.500 5.500-5.500" fill="none" stroke="#444" stroke-width="2.600"/>

<text class="pl" x="1500" y="308" textLength="103" lengthAdjust="spacingAndGlyphs">Improve writing</text>
<text class="pl" x="1662" y="308" textLength="165" lengthAdjust="spacingAndGlyphs">Fix spelling and grammar</text>
<text class="pl" x="1500" y="348" textLength="86" lengthAdjust="spacingAndGlyphs">Make shorter</text>
<text class="pl" x="1644" y="348" textLength="81" lengthAdjust="spacingAndGlyphs">Make longer</text>
<text class="pl" x="1783" y="348" textLength="72" lengthAdjust="spacingAndGlyphs">Summarize</text>
<text class="pl" x="1500" y="389" textLength="31" lengthAdjust="spacingAndGlyphs">Tone</text>

<text x="1620" y="435" font-size="13" textLength="255" lengthAdjust="spacingAndGlyphs" style="fill:#333">Beta version has a daily generation limit.</text>
<rect x="1459" y="471" width="416" height="1" fill="#e2e2e2"/>

<rect class="b" x="1459.5" y="508.5" width="415.5" height="38" rx="2"/>
<text x="1478" y="534" font-size="15.5" textLength="143" lengthAdjust="spacingAndGlyphs" style="fill:#777">Search for a setting</text>
<text x="1459" y="578" font-size="15.5" textLength="136" lengthAdjust="spacingAndGlyphs" style="fill:#222;stroke:#222;stroke-width:.4px">Background Color</text>
<rect class="b" x="1459.5" y="594.5" width="415.5" height="43" rx="2"/>
<text x="1481" y="622" font-size="15.5" textLength="85" lengthAdjust="spacingAndGlyphs" style="fill:#333">transparent</text>
<rect x="1831" y="604" width="25" height="25" fill="url(#st)"/>
<text x="1459" y="680" font-size="15.5" textLength="126" lengthAdjust="spacingAndGlyphs" style="fill:#222;stroke:#222;stroke-width:.4px">Shadow Settings</text>
<rect x="1467" y="708" width="35" height="26" rx="3" fill="#666" opacity=".75" filter="url(#sh3)"/>
<rect x="1463" y="704" width="35" height="26" rx="3" fill="#fff" stroke="#aaa" stroke-width="1"/>
</svg>
</body></html>
